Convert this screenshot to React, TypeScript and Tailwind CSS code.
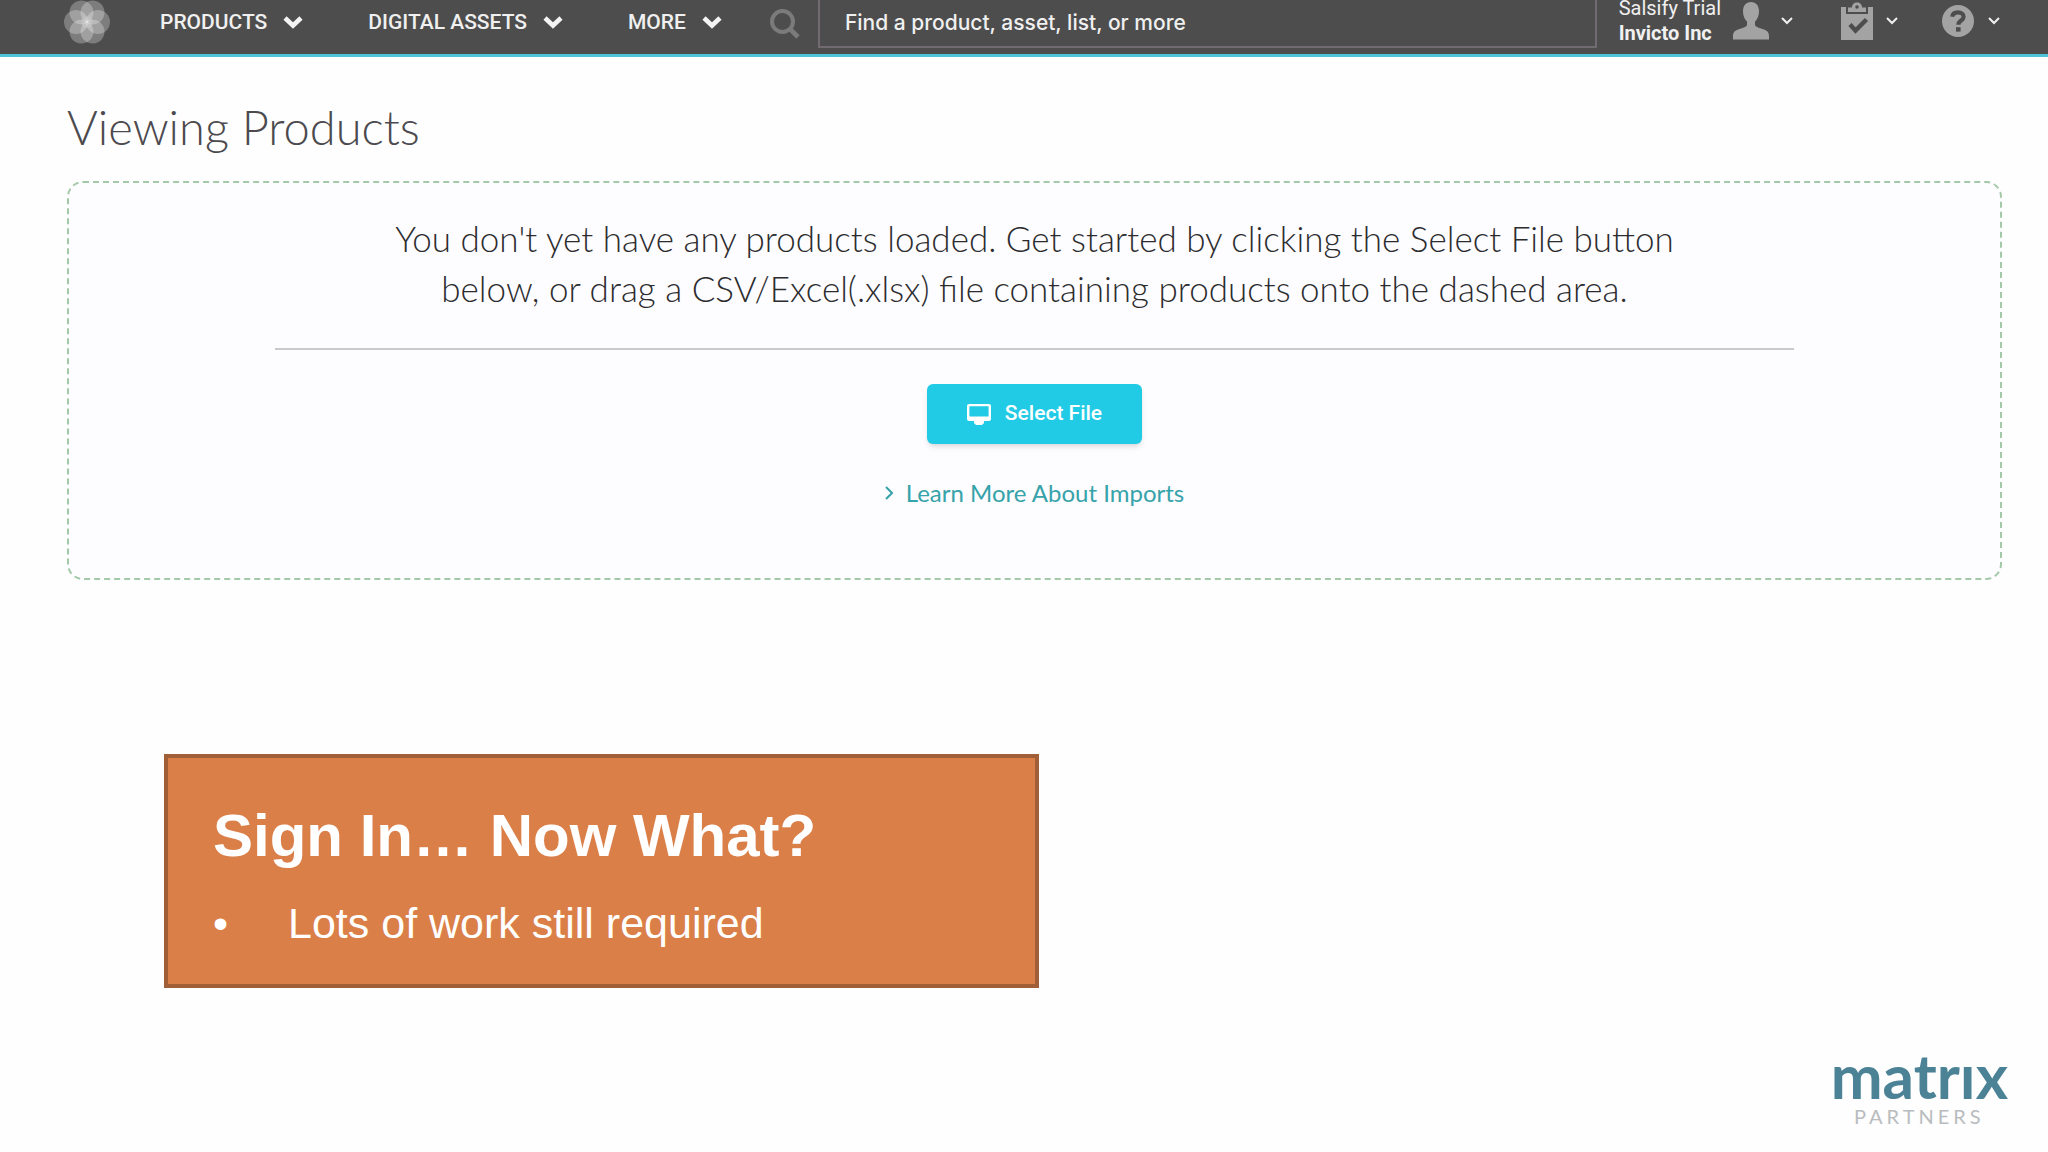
import React from "react";

const petals = [30, 90, 150, 210, 270, 330];

const Flower = () => {
  return (
    <svg viewBox="-23 -23 46 46" className="size-[46px]" aria-hidden="true">
      {petals.map((angle) => (
        <circle key={angle} cx="0" cy="-11" r="12" fill="#fff" fillOpacity="0.27" transform={`rotate(${angle})`} />
      ))}
      <circle r="6" fill="#fff" fillOpacity="0.12" />
    </svg>
  );
};

const ThickChevron = () => {
  return (
    <svg viewBox="0 0 20 14" className="w-5 h-[14px]" fill="none" stroke="#f4f4f4" strokeWidth="4.6" aria-hidden="true">
      <path d="M2 3 L10 10.5 L18 3" />
    </svg>
  );
};

const ThinChevron = () => {
  return (
    <svg viewBox="0 0 12 8" className="w-3 h-2" fill="none" stroke="#f0f0f0" strokeWidth="2" aria-hidden="true">
      <path d="M1 1 L6 6 L11 1" />
    </svg>
  );
};

const SearchIcon = () => {
  return (
    <svg viewBox="0 0 30 30" className="size-[30px]" fill="none" stroke="#7b7b7b" aria-hidden="true">
      <circle cx="12.5" cy="12.5" r="10.5" strokeWidth="4" />
      <path d="M20 20 L28 28" strokeWidth="4.6" />
    </svg>
  );
};

const PersonIcon = () => {
  return (
    <svg viewBox="0 0 36 38" className="w-9 h-[38px]" fill="#a3a3a3" aria-hidden="true">
      <path d="M18 0C23 0 26 3.6 26 9.2C26 13.6 24.4 17.4 22 19.4V22.6C22 24 23 24.8 25 25.4L31 27.4C34.6 28.8 36 30.6 36 34V37.4H0V34C0 30.6 1.4 28.8 5 27.4L11 25.4C13 24.8 14 24 14 22.6V19.4C11.6 17.4 10 13.6 10 9.2C10 3.6 13 0 18 0Z" />
    </svg>
  );
};

const ClipboardIcon = () => {
  return (
    <svg viewBox="0 0 32 38" className="w-8 h-[38px]" aria-hidden="true">
      <path d="M0 5H5V12H27V5H32V38H0Z" fill="#a3a3a3" />
      <path d="M7 10V5.5H11C11 2.5 13 .5 16 .5S21 2.5 21 5.5H25V10Z" fill="#a3a3a3" />
      <circle cx="16" cy="5" r="1.8" fill="#4d4d4d" />
      <path d="M9 22.5L14.5 28.5L25.5 17.5" fill="none" stroke="#4d4d4d" strokeWidth="4.4" />
    </svg>
  );
};

const HelpIcon = () => {
  return (
    <svg viewBox="0 0 32 32" className="size-8" aria-hidden="true">
      <circle cx="16" cy="16" r="16" fill="#a3a3a3" />
      <path d="M10.2 11.8C10.6 8.8 12.8 7.4 16 7.4C19.4 7.4 21.6 9.2 21.6 11.8C21.6 15.6 16.4 15.4 16.4 19.8" fill="none" stroke="#4d4d4d" strokeWidth="4.2" />
      <rect x="14" y="22.2" width="4.6" height="4.4" fill="#4d4d4d" />
    </svg>
  );
};

const MonitorIcon = () => {
  return (
    <svg viewBox="0 0 24 21" className="w-6 h-[21px]" fill="#fff" aria-hidden="true">
      <path fillRule="evenodd" d="M2 0H22Q24 0 24 2V15Q24 17 22 17H17V19L15 21H9L7 19V17H2Q0 17 0 15V2Q0 0 2 0ZM2.4 2.2V12.6H21.6V2.2Z" />
    </svg>
  );
};

const NavItem = ({ label }: { label: string }) => {
  return (
    <button className="flex items-center gap-4 whitespace-nowrap text-[21px] leading-7 font-medium text-[#f0f0f0]">
      {label}
      <ThickChevron />
    </button>
  );
};

const Header = () => {
  return (
    <header className="flex items-start bg-[#4d4d4d] border-b-3 border-[#4fc3d8] h-[57px] pl-16 pr-12 font-['Roboto',sans-serif]">
      <div className="flex items-center h-[43px]">
        <a href="#" aria-label="Home">
          <Flower />
        </a>
        <nav className="flex items-center gap-[65px] pl-[50px]">
          <NavItem label="PRODUCTS" />
          <NavItem label="DIGITAL ASSETS" />
          <NavItem label="MORE" />
        </nav>
        <label htmlFor="search" className="pl-12 pr-[18px] pt-1">
          <SearchIcon />
        </label>
      </div>
      <input
        id="search"
        type="text"
        aria-label="Search"
        placeholder="Find a product, asset, list, or more"
        className="flex-1 min-w-0 h-12 border-2 border-t-0 border-[#716b71] px-[25px] pb-[2px] font-['Inter',sans-serif] text-[21px] font-medium text-[#f0f0f0] placeholder:text-[#f0f0f0]"
      />
      <div className="flex items-center h-[42px] pl-[22px]">
        <button className="flex items-center gap-3 text-left">
          <span className="flex flex-col whitespace-nowrap text-xl leading-[25px] text-[#f0f0f0]">
            <span>Salsify Trial</span>
            <span className="font-bold">Invicto Inc</span>
          </span>
          <PersonIcon />
          <ThinChevron />
        </button>
        <button aria-label="Tasks" className="flex items-center gap-[13px] pl-12">
          <ClipboardIcon />
          <ThinChevron />
        </button>
        <button aria-label="Help" className="flex items-center gap-[14px] pl-11">
          <HelpIcon />
          <ThinChevron />
        </button>
      </div>
    </header>
  );
};

const App = () => {
  return (
    <div className="min-h-screen flex flex-col bg-[#fefefe]">
      <Header />
      <main className="pl-[67px] pr-[46px] pt-10 font-['Lato',sans-serif]">
        <h1 className="text-[47px] leading-[60px] font-light text-[#4c4a4e]">Viewing Products</h1>
        <section className="mt-6 flex flex-col items-center rounded-2xl border-2 border-dashed border-[#a3c9a8] bg-[#fdfcfe] px-[206px] pt-[30px] pb-[70px]">
          <p className="max-w-[1300px] text-center text-[35px] leading-[50px] font-light text-[#2c2c2f]">
            You don't yet have any products loaded. Get started by clicking the Select File button
            below, or drag a CSV/Excel(.xlsx) file containing products onto the dashed area.
          </p>
          <hr className="mt-[35px] w-full border-t-2 border-[#cacaca]" />
          <button className="mt-[34px] flex items-center gap-[14px] h-[60px] rounded-md bg-[#22cbe5] px-10 text-[21px] font-medium text-white shadow-md font-['Roboto',sans-serif]">
            <MonitorIcon />
            Select File
          </button>
          <a href="#" className="mt-[34px] flex items-center gap-[13px] text-2xl leading-[30px] text-[#36a3aa]">
            <svg viewBox="0 0 8 14" className="w-2 h-[14px]" fill="none" stroke="#36a3aa" strokeWidth="2" aria-hidden="true">
              <path d="M1 1 L7 7 L1 13" />
            </svg>
            Learn More About Imports
          </a>
        </section>
      </main>
      <section className="mt-[174px] ml-[164px] w-[43%] max-w-[875px] border-4 border-[#a05f36] bg-[#db7f48] px-[45px] pt-11 pb-9 text-white font-['Liberation_Sans',sans-serif]">
        <h2 className="text-[60px] leading-[68px] font-bold">Sign In… Now What?</h2>
        <ul className="mt-7">
          <li className="flex text-[43px] leading-[50px]">
            <span className="w-[75px]">•</span>
            Lots of work still required
          </li>
        </ul>
      </section>
      <footer className="mt-auto flex justify-end pr-10 pb-6">
        <div className="flex flex-col items-center">
          <span aria-label="matrix" className="font-['Lato',sans-serif] text-[62px] leading-[58px] font-bold text-[#4b8296]">matrıx</span>
          <span className="font-['Lato',sans-serif] text-xl leading-6 tracking-[4px] text-[#b9bcbf]">PARTNERS</span>
        </div>
      </footer>
    </div>
  );
};

export default App;
